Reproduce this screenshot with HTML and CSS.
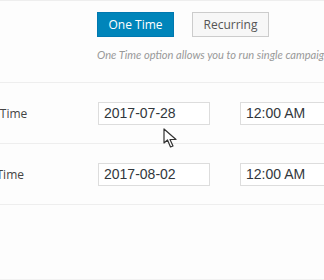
FILE: index.html
```html
<!DOCTYPE html>
<html>
<head>
<meta charset="utf-8">
<link rel="stylesheet" href="styles.css">
</head>
<body>
<div class="page">
  <section class="type-section">
    <div class="toggle">
      <button class="btn btn-primary">One Time</button>
      <button class="btn btn-secondary">Recurring</button>
    </div>
    <p class="desc">One Time option allows you to run single campaign once at scheduled time.</p>
  </section>
  <div class="row">
    <span class="label label-start">Start Time</span>
    <span class="input date">2017-07-28</span>
    <span class="input time">12:00 AM</span>
  </div>
  <div class="row">
    <span class="label label-end">End Time</span>
    <span class="input date">2017-08-02</span>
    <span class="input time">12:00 AM</span>
  </div>
  <div class="spacer"></div>
  <svg class="cursor" width="15" height="21" viewBox="0 0 15 21">
    <path d="M1 1 L1 15 L4.5 12 L7.5 19 L10 18 L7 11.5 L13 11.5 Z" fill="#fff" stroke="#333" stroke-width="1.2" stroke-linejoin="round"/>
  </svg>
</div>
</body>
</html>
```
FILE: styles.css
```css
html, body {
  margin: 0;
  padding: 0;
  background: #fdfdfd;
  overflow: hidden;
}
.page {
  position: relative;
  width: 324px;
  height: 280px;
  overflow: hidden;
  font-family: "Open Sans", "Noto Sans", sans-serif;
  color: #444;
}
.type-section {
  border-top: 1px solid #eeeeee;
  height: 81px;
  box-sizing: content-box;
  padding-left: 97px;
}
.toggle {
  display: flex;
  gap: 18px;
  padding-top: 11px;
}
.btn {
  width: 77px;
  height: 25px;
  box-sizing: border-box;
  font-family: "Open Sans", "Noto Sans", sans-serif;
  font-size: 12px;
  line-height: 22px;
  padding: 0;
  border-radius: 0;
  cursor: pointer;
}
.btn-primary {
  background: #0085ba;
  border: 1px solid #0078b0;
  color: #fff;
}
.btn-secondary {
  background: #f7f7f7;
  border: 1px solid #cccccc;
  color: #555;
}
.desc {
  margin: 11px 0 0;
  font-family: Lato, "Open Sans", sans-serif;
  font-size: 11.1px;
  font-style: italic;
  color: #999;
  white-space: nowrap;
}
.row {
  border-top: 1px solid #eeeeee;
  height: 60px;
  display: flex;
  align-items: center;
}
.label {
  font-size: 12px;
  color: #444;
  white-space: nowrap;
  box-sizing: border-box;
  flex: 0 0 auto;
}
.label-start {
  margin-left: -30px;
  width: 128px;
}
.label-end {
  margin-left: -28px;
  width: 126px;
}
.input {
  height: 23px;
  box-sizing: border-box;
  border: 1px solid #dddddd;
  background: #fff;
  font-family: "Liberation Sans", Arial, sans-serif;
  font-size: 14px;
  line-height: 21px;
  color: #32373c;
  padding-left: 5px;
  flex: 0 0 auto;
}
.date {
  width: 112px;
}
.time {
  width: 112px;
  margin-left: 30px;
}
.spacer {
  border-top: 1px solid #eeeeee;
  border-bottom: 1px solid #f2f2f2;
  height: 74px;
}
.cursor {
  position: absolute;
  left: 163px;
  top: 128px;
}
```
